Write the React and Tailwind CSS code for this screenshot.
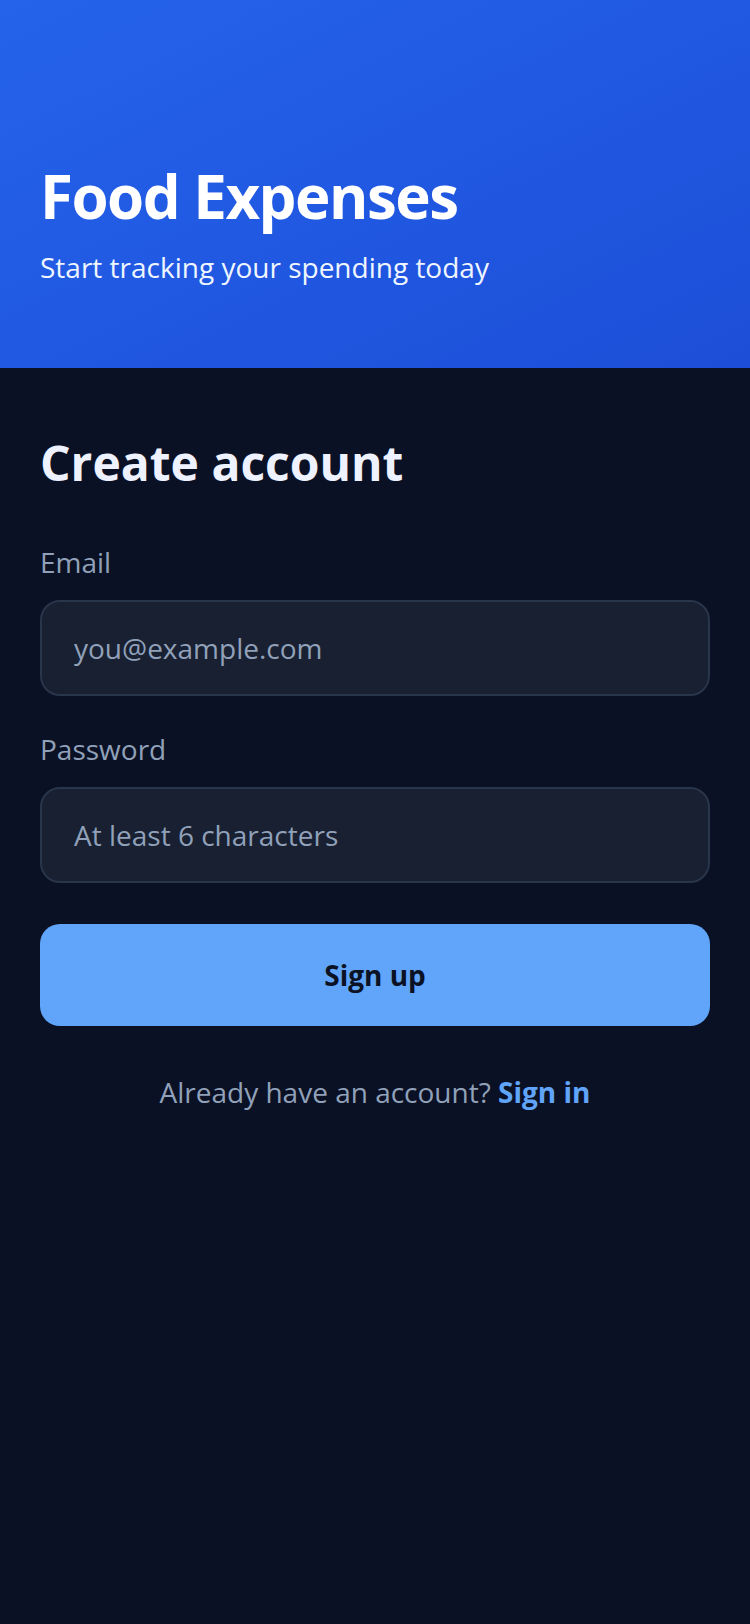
import React, { useState } from "react";

export default function App() {
  const [email, setEmail] = useState("");
  const [password, setPassword] = useState("");

  return (
    <div className="min-h-screen bg-[#0b1124] font-['Open_Sans',sans-serif]">
      {/* header */}
      <div className="h-[368px] bg-linear-to-br from-[#2563eb] to-[#1d4ed8] px-10 pt-[160px]">
        <h1 className="text-[60px] font-bold leading-[72px] tracking-tight text-white">
          Food Expenses
        </h1>
        <p className="mt-[15px] text-[28px] leading-[40px] text-blue-50">
          Start tracking your spending today
        </p>
      </div>

      {/* form */}
      <div className="px-10 pt-[67px]">
        <h2 className="text-[48px] font-bold leading-[56px] text-[#eef2ff]">
          Create account
        </h2>

        <form className="mt-[51px] flex flex-col" onSubmit={(e) => e.preventDefault()}>
          <label className="text-[28px] leading-[40px] text-slate-400">Email</label>
          <input
            type="email"
            value={email}
            onChange={(e) => setEmail(e.target.value)}
            placeholder="you@example.com"
            className="mt-[18px] h-[96px] w-full rounded-[20px] border-2 border-[#29354a] bg-[#182032] px-8 text-[28px] text-slate-100 outline-none placeholder:text-slate-400"
          />

          <label className="mt-[33px] text-[28px] leading-[40px] text-slate-400">Password</label>
          <input
            type="password"
            value={password}
            onChange={(e) => setPassword(e.target.value)}
            placeholder="At least 6 characters"
            className="mt-[18px] h-[96px] w-full rounded-[20px] border-2 border-[#29354a] bg-[#182032] px-8 text-[28px] text-slate-100 outline-none placeholder:text-slate-400"
          />

          <button
            type="submit"
            className="mt-[41px] h-[102px] w-full rounded-[20px] bg-[#60a5fa] text-[28px] font-bold text-[#0b1224]"
          >
            Sign up
          </button>
        </form>

        <p className="mt-[46px] text-center text-[28px] leading-[40px] text-slate-400">
          Already have an account? <span className="font-bold text-[#60a5fa]">Sign in</span>
        </p>
      </div>
    </div>
  );
}
